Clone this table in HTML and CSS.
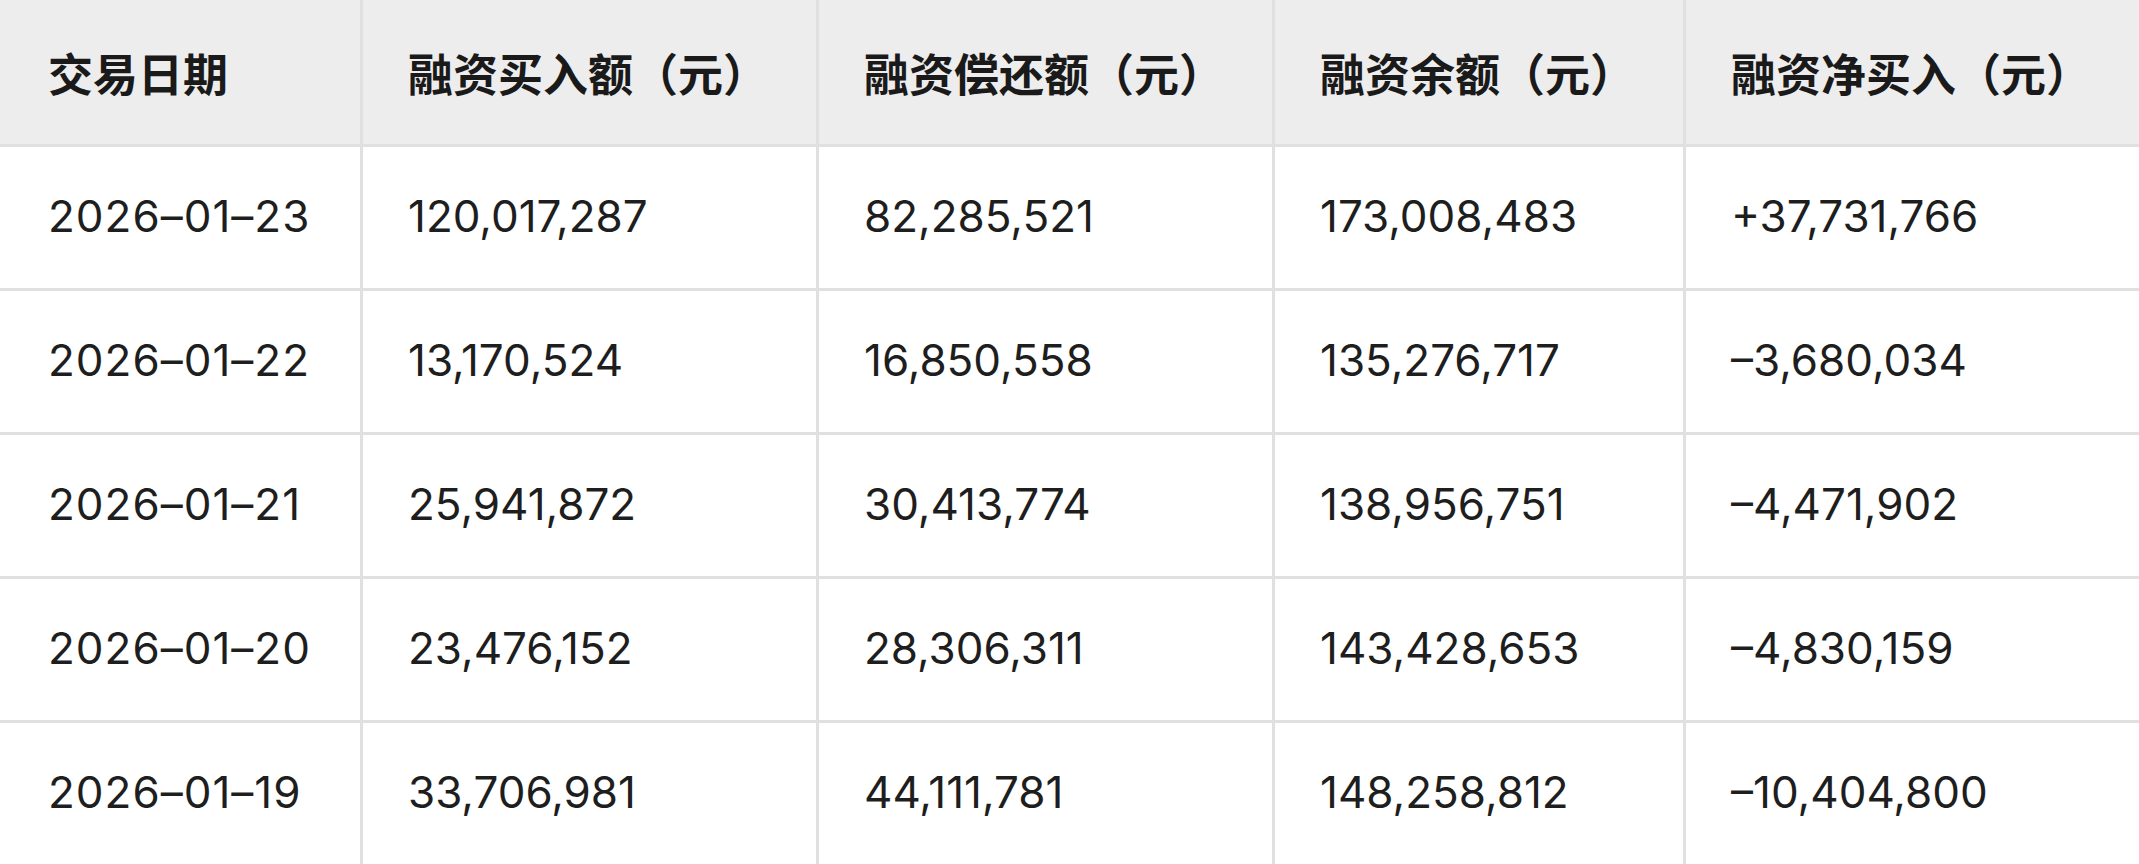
FILE: index.html
```html
<!DOCTYPE html>
<html lang="zh-CN">
<head>
<meta charset="utf-8">
<title>融资数据</title>
<link rel="stylesheet" href="styles.css">
</head>
<body>
<div class="table">
  <div class="cell head first">交易日期</div>
  <div class="cell head">融资买入额（元）</div>
  <div class="cell head">融资偿还额（元）</div>
  <div class="cell head">融资余额（元）</div>
  <div class="cell head">融资净买入（元）</div>

  <div class="cell first date">2026–01–23</div>
  <div class="cell">120,017,287</div>
  <div class="cell">82,285,521</div>
  <div class="cell">173,008,483</div>
  <div class="cell">+37,731,766</div>

  <div class="cell first date">2026–01–22</div>
  <div class="cell">13,170,524</div>
  <div class="cell">16,850,558</div>
  <div class="cell">135,276,717</div>
  <div class="cell">–3,680,034</div>

  <div class="cell first date">2026–01–21</div>
  <div class="cell">25,941,872</div>
  <div class="cell">30,413,774</div>
  <div class="cell">138,956,751</div>
  <div class="cell">–4,471,902</div>

  <div class="cell first date">2026–01–20</div>
  <div class="cell">23,476,152</div>
  <div class="cell">28,306,311</div>
  <div class="cell">143,428,653</div>
  <div class="cell">–4,830,159</div>

  <div class="cell first date">2026–01–19</div>
  <div class="cell">33,706,981</div>
  <div class="cell">44,111,781</div>
  <div class="cell">148,258,812</div>
  <div class="cell">–10,404,800</div>
</div>
</body>
</html>
```
FILE: styles.css
```css
html, body {
  margin: 0;
  padding: 0;
  background: #ffffff;
  overflow: hidden;
}

.table {
  display: grid;
  grid-template-columns: 360px 453px 453px 408px 1fr;
  grid-template-rows: 144px repeat(5, 141px);
  gap: 3px;
  background: #e0e0e0;
  width: 2139px;
  font-family: Inter, "Noto Sans CJK SC", sans-serif;
  font-size: 44px;
  color: #1e1e1e;
}

.cell {
  display: flex;
  align-items: center;
  background: #ffffff;
  padding-left: 45px;
  padding-bottom: 3px;
  white-space: nowrap;
}

.cell.first {
  padding-left: 48px;
}

.cell.date {
  letter-spacing: 1px;
}

.cell.head {
  background: #ededed;
  padding-bottom: 0;
  letter-spacing: 0;
  font-family: "Noto Sans CJK SC", sans-serif;
  font-size: 45px;
  font-weight: 700;
  color: #1a1a1a;
}
```
